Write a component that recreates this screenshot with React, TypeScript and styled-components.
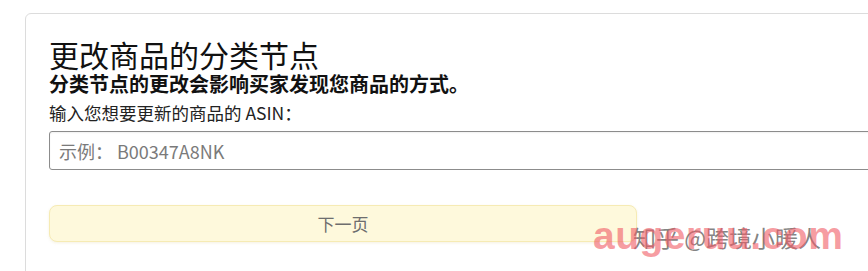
import React from "react";
import styled, { createGlobalStyle } from "styled-components";

const Global = createGlobalStyle`
  html, body { margin: 0; padding: 0; background: #fff; overflow: hidden; }
  body { font-family: "Noto Sans CJK SC", "Noto Sans", sans-serif; }
  * { box-sizing: border-box; }
`;

const Page = styled.div`
  position: relative;
  width: 868px;
  height: 271px;
  overflow: hidden;
  padding: 13px 0 0 25px;
`;

const Card = styled.section`
  width: 900px;
  height: 300px;
  border: 1px solid #dcdcdc;
  border-radius: 6px;
  padding: 22px 0 0 23px;
  display: flex;
  flex-direction: column;
`;

const Title = styled.h1`
  margin: 0;
  font-size: 30px;
  line-height: 36px;
  font-weight: 400;
  color: #111;
`;

const Subtitle = styled.p`
  margin: 0;
  font-size: 20px;
  line-height: 24px;
  font-weight: 700;
  color: #111;
`;

const Label = styled.label`
  margin-top: 6px;
  font-size: 17.5px;
  line-height: 22px;
  color: #222;
`;

const Input = styled.input`
  margin-top: 7px;
  width: 100%;
  height: 39px;
  border: 1px solid #8c8c8c;
  border-radius: 3px;
  padding: 0 9px;
  font-family: "Noto Sans CJK SC", "Noto Sans", sans-serif;
  font-size: 18px;
  color: #333;
  box-shadow: inset 0 1px 2px rgba(0, 0, 0, 0.06);
  outline: none;
  &::placeholder { color: #7a7a7a; }
`;

const NextButton = styled.button`
  margin-top: 35px;
  width: 588px;
  height: 37px;
  border: 1px solid #f6ebb4;
  border-radius: 8px;
  background: #fef9dc;
  box-shadow: 0 1px 3px rgba(200, 180, 90, 0.18);
  font-family: "Noto Sans CJK SC", "Noto Sans", sans-serif;
  font-size: 17px;
  color: #6e6e6e;
  cursor: default;
`;

const Watermark = styled.div`
  position: absolute;
  left: 590px;
  top: 214px;
  width: 270px;
  height: 48px;
  pointer-events: none;
`;

const Site = styled.span`
  position: absolute;
  left: 3px;
  top: 0;
  font-family: "Liberation Sans", Arial, sans-serif;
  font-weight: 700;
  font-size: 39px;
  line-height: 44px;
  letter-spacing: 0.5px;
  white-space: nowrap;
  color: rgba(240, 90, 100, 0.6);
`;

const Author = styled.span`
  position: absolute;
  left: 43px;
  top: 8px;
  font-size: 23px;
  line-height: 30px;
  color: rgba(110, 110, 110, 0.85);
  white-space: nowrap;
`;

export default function App() {
  return (
    <>
      <Global />
      <Page>
        <Card>
          <Title>更改商品的分类节点</Title>
          <Subtitle>分类节点的更改会影响买家发现您商品的方式。</Subtitle>
          <Label htmlFor="asin">输入您想要更新的商品的 ASIN：</Label>
          <Input id="asin" placeholder="示例： B00347A8NK" />
          <NextButton type="button">下一页</NextButton>
        </Card>
        <Watermark>
          <Author>知乎 @跨境小暖人</Author>
          <Site>augeruu.com</Site>
        </Watermark>
      </Page>
    </>
  );
}
